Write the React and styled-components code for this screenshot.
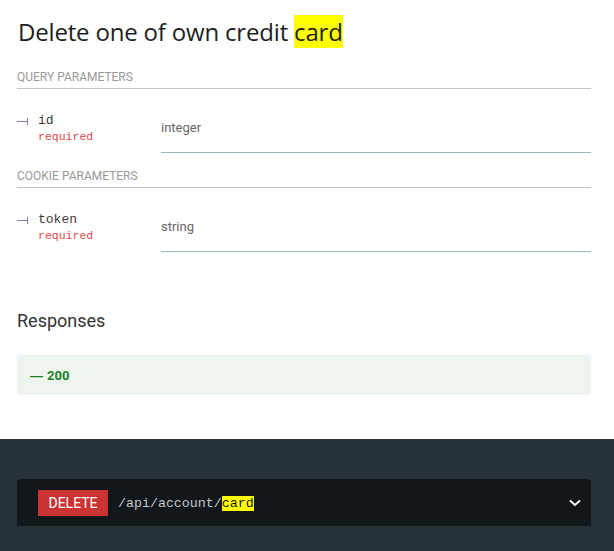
import React from 'react'
import styled, { createGlobalStyle } from 'styled-components'

const GlobalStyle = createGlobalStyle`
  html, body {
    margin: 0;
    padding: 0;
    background: #ffffff;
  }
  body {
    font-family: Roboto, "Liberation Sans", sans-serif;
  }
`

const Page = styled.div`
  width: 614px;
  min-height: 551px;
  display: flex;
  flex-direction: column;
`

const Middle = styled.section`
  padding: 18px 23px 44px 17px;
`

const Title = styled.h2`
  margin: -1px 0 0 1px;
  font-family: "Open Sans", "Liberation Sans", sans-serif;
  font-weight: 400;
  font-size: 24px;
  line-height: 30px;
  color: #1e1e1e;
  letter-spacing: -0.18px;
`

const Mark = styled.mark`
  background: #ffff00;
  color: inherit;
  padding: 0;
`

const GroupHeader = styled.h5`
  margin: ${p => p.$first ? '22px' : '15px'} 0 0;
  padding: 0 0 3px;
  border-bottom: 1px solid #c4c4c4;
  font-family: Roboto, "Liberation Sans", sans-serif;
  font-weight: 400;
  font-size: 12px;
  line-height: 16px;
  text-transform: uppercase;
  color: #999999;
`

const ParamRow = styled.div`
  display: flex;
  align-items: flex-start;
`

const NameCell = styled.div`
  width: 144px;
  flex: none;
  padding-top: 24px;
  display: grid;
  grid-template-columns: 21px auto;
  align-items: center;
`

const Bullet = styled.span`
  position: relative;
  display: block;
  width: 10px;
  height: 1px;
  background: #7c7cbb;
  &::after {
    content: '';
    position: absolute;
    right: -1px;
    top: -3px;
    width: 1px;
    height: 7px;
    background: #7c7cbb;
  }
`

const ParamName = styled.span`
  font-family: "Liberation Mono", Courier, monospace;
  font-size: 13px;
  line-height: 16px;
  color: #3a3a3a;
`

const Required = styled.span`
  grid-column: 2;
  font-family: "Liberation Mono", Courier, monospace;
  font-size: 11.5px;
  line-height: 16px;
  color: #e0474a;
`

const DetailCell = styled.div`
  flex: 1;
  padding: 31px 0 16px;
  border-bottom: 1px solid #9fb4be;
  font-size: 13px;
  line-height: 16px;
  color: #666666;
`

const ResponsesTitle = styled.h3`
  margin: 58px 0 0;
  font-family: Roboto, "Liberation Sans", sans-serif;
  font-weight: 400;
  font-size: 18px;
  line-height: 22px;
  color: #333333;
`

const ResponseBox = styled.div`
  margin-top: 23px;
  height: 40px;
  display: flex;
  align-items: center;
  padding: 0 13px;
  border-radius: 2px;
  background: #eef5ef;
  font-size: 13px;
  font-weight: 700;
  color: #1d8127;
`

const Dash = styled.span`
  font-family: "Liberation Sans", sans-serif;
  margin-right: 4px;
`

const Dark = styled.section`
  flex: 1;
  background: #263238;
  padding: 40px 23px 26px 17px;
`

const Endpoint = styled.div`
  height: 46px;
  display: flex;
  align-items: center;
  padding: 1px 10px 0 21px;
  background: #11171a;
  border-radius: 4px 4px 0 0;
`

const Method = styled.span`
  width: 70px;
  height: 26px;
  display: flex;
  align-items: center;
  justify-content: center;
  background: #cc3333;
  color: #ffffff;
  font-size: 14px;
  text-transform: uppercase;
`

const Path = styled.span`
  flex: 1;
  margin-left: 10px;
  font-family: "Liberation Mono", Courier, monospace;
  font-size: 13.3px;
  color: #c0c6ca;
`

const PathMark = styled.mark`
  background: #ffff00;
  color: #11171a;
`

const Chevron = () => (
  <svg width="12" height="8" viewBox="0 0 12 8">
    <polyline points="1,1.5 6,6 11,1.5" fill="none" stroke="#ffffff" strokeWidth="2" />
  </svg>
)

const params = [
  { group: 'query parameters', name: 'id', type: 'integer' },
  { group: 'cookie parameters', name: 'token', type: 'string' },
]

export default function App() {
  return (
    <Page>
      <GlobalStyle />
      <Middle>
        <Title>Delete one of own credit <Mark>card</Mark></Title>
        {params.map((p, i) => (
          <div key={p.name}>
            <GroupHeader $first={i === 0}>{p.group}</GroupHeader>
            <ParamRow>
              <NameCell>
                <Bullet />
                <ParamName>{p.name}</ParamName>
                <Required>required</Required>
              </NameCell>
              <DetailCell>{p.type}</DetailCell>
            </ParamRow>
          </div>
        ))}
        <ResponsesTitle>Responses</ResponsesTitle>
        <ResponseBox><Dash>—</Dash>200</ResponseBox>
      </Middle>
      <Dark>
        <Endpoint>
          <Method>Delete</Method>
          <Path>/api/account/<PathMark>card</PathMark></Path>
          <Chevron />
        </Endpoint>
      </Dark>
    </Page>
  )
}
